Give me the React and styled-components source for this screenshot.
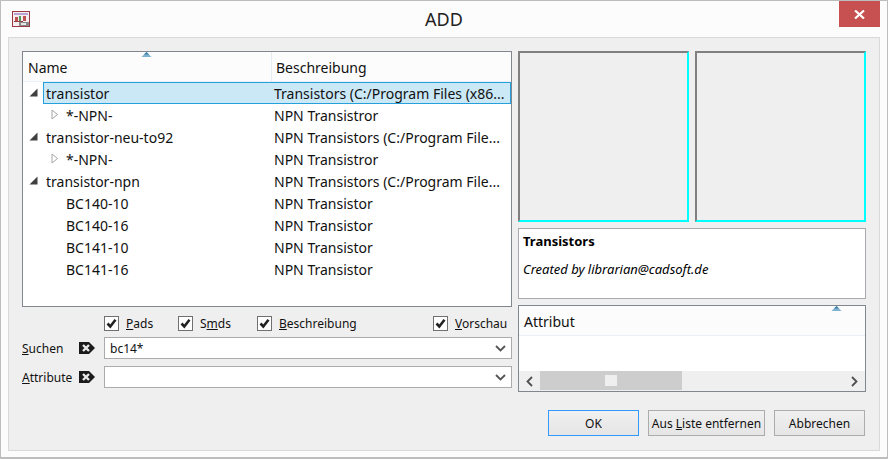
import React from 'react';
import styled, { createGlobalStyle } from 'styled-components';

const Global = createGlobalStyle`
    html, body {
        margin: 0;
        padding: 0;
        background: #fcfcfc;
    }
    * {
        box-sizing: border-box;
    }
`;

const Window = styled.div`
    width: 888px;
    height: 459px;
    display: flex;
    flex-direction: column;
    background: #fcfcfc;
    border: 1px solid #bdbdbd;
    border-bottom-width: 2px;
    font-family: 'Noto Sans', 'Liberation Sans', sans-serif;
    color: #111;
    overflow: hidden;
`;

const TitleBar = styled.div`
    height: 36px;
    flex: none;
    display: grid;
    grid-template-columns: 48px 1fr 41px 7px;
    align-items: start;
`;

const AppIcon = styled.div`
    padding: 10px 0 0 11px;
    line-height: 0;
`;

const Title = styled.div`
    font-size: 18px;
    line-height: 37px;
    text-align: center;
    color: #222;
`;

const CloseButton = styled.div`
    height: 26px;
    background: #c75050;
    display: flex;
    align-items: center;
    justify-content: center;
`;

const Panel = styled.div`
    flex: 1;
    margin: 0 7px 6px 7px;
    padding: 13px 13px 14px 13px;
    background: #efefef;
    border: 1px solid #d9d9d9;
    display: flex;
    flex-direction: column;
`;

const Columns = styled.div`
    display: grid;
    grid-template-columns: 490px 348px;
    column-gap: 6px;
`;

const LeftColumn = styled.div`
    display: flex;
    flex-direction: column;
`;

const RightColumn = styled.div`
    display: flex;
    flex-direction: column;
`;

const TreeBox = styled.div`
    height: 256px;
    background: #fff;
    border: 1px solid #82878f;
`;

const HeaderRow = styled.div`
    position: relative;
    height: 30px;
    display: flex;
    background: #fcfcfc;
    border-bottom: 1px solid #eaf0f6;
    font-size: 14px;
    line-height: 32px;
`;

const HeaderCell = styled.div`
    flex: ${p => (p.$width ? `0 0 ${p.$width}px` : 1)};
    padding-left: ${p => p.$pad}px;
    border-right: ${p => (p.$divider ? '1px solid #e6ecf2' : 'none')};
`;

const SortMark = styled.div`
    position: absolute;
    top: 0;
    left: ${p => p.$left}px;
    line-height: 0;
`;

const TreeRow = styled.div`
    height: 22px;
    display: flex;
    font-size: 14px;
    line-height: 20px;
`;

const Gutter = styled.div`
    flex: 0 0 20px;
    padding: 6px 0 0 6px;
    line-height: 0;
`;

const RowBody = styled.div`
    flex: 1;
    min-width: 0;
    display: flex;
    padding-top: 1px;
    background: ${p => (p.$selected ? '#cbe8f6' : 'transparent')};
    border: 1px solid ${p => (p.$selected ? '#26a0da' : 'transparent')};
`;

const NameCell = styled.div`
    flex: 0 0 230px;
    display: flex;
    align-items: flex-start;
    padding-left: ${p => (p.$depth ? (p.$toggle ? 7 : 22) : 2)}px;
`;

const DescCell = styled.div`
    flex: 1;
    min-width: 0;
    white-space: nowrap;
`;

const ChildToggle = styled.span`
    flex: 0 0 15px;
    padding-top: 3px;
    line-height: 0;
`;

const ChecksRow = styled.div`
    height: 17px;
    margin-top: 8px;
    padding-left: 82px;
    display: flex;
    font-size: 12px;
`;

const CheckItem = styled.label`
    flex: 0 0 ${p => p.$width}px;
    display: flex;
    align-items: center;
    gap: 7px;
    white-space: nowrap;
`;

const CheckBox = styled.span`
    width: 15px;
    height: 15px;
    flex: none;
    background: #fff;
    border: 1px solid #707070;
    line-height: 0;
`;

const FieldRow = styled.div`
    height: 22px;
    margin-top: ${p => p.$top}px;
    display: flex;
    align-items: center;
    font-size: 12px;
`;

const FieldLabel = styled.div`
    flex: 0 0 57px;
`;

const FieldIcon = styled.div`
    flex: 0 0 25px;
    line-height: 0;
`;

const ComboBox = styled.div`
    flex: 1;
    height: 100%;
    display: flex;
    align-items: center;
    justify-content: space-between;
    padding: 0 5px;
    background: #fff;
    border: 1px solid #ababab;
`;

const Previews = styled.div`
    height: 171px;
    display: flex;
    gap: 6px;
`;

const Preview = styled.div`
    flex: 1;
    border: 2px solid;
    border-color: #808080 #00ffff #00ffff #808080;
`;

const InfoBox = styled.div`
    height: 71px;
    margin-top: 6px;
    padding: 4px 4px;
    background: #fff;
    border: 1px solid #a9a9b0;
    font-size: 13px;
    color: #000;
`;

const InfoTitle = styled.div`
    font-weight: 700;
    line-height: 16px;
`;

const InfoText = styled.div`
    margin-top: 12px;
    font-style: italic;
    line-height: 16px;
`;

const AttrBox = styled.div`
    height: 87px;
    margin-top: 6px;
    background: #fff;
    border: 1px solid #82878f;
    display: flex;
    flex-direction: column;
`;

const AttrBody = styled.div`
    flex: 1;
`;

const ScrollBar = styled.div`
    height: 20px;
    display: flex;
    align-items: center;
    background: #efefef;
`;

const ScrollArrow = styled.div`
    flex: 0 0 21px;
    display: flex;
    justify-content: center;
    line-height: 0;
`;

const ScrollTrack = styled.div`
    flex: 1;
    height: 100%;
`;

const ScrollThumb = styled.div`
    width: 142px;
    height: 19px;
    background: #cdcdcd;
    display: flex;
    align-items: center;
    justify-content: center;
`;

const ThumbGrip = styled.div`
    width: 12px;
    height: 11px;
    background: #efefef;
`;

const Footer = styled.div`
    margin-top: 18px;
    padding-right: 1px;
    display: flex;
    justify-content: flex-end;
    gap: 9px;
`;

const Button = styled.div`
    width: ${p => p.$width}px;
    height: 26px;
    display: flex;
    align-items: center;
    justify-content: center;
    font-size: 12px;
    white-space: nowrap;
    background: linear-gradient(#f0f0f0, #e5e5e5);
    border: 1px solid ${p => (p.$focused ? '#3399ff' : '#acacac')};
`;

const SortIcon = () => (
    <svg width="11" height="5" viewBox="0 0 11 5">
        <path d="M5.5 0 L10.5 5 H0.5 Z" fill="#7fb2cf" />
        <path d="M5.5 0 L3 2.5 H8 Z" fill="#3f7fa6" />
    </svg>
);

const OpenArrow = () => (
    <svg width="9" height="9" viewBox="0 0 9 9">
        <path d="M8.5 0.5 V8.5 H0.5 Z" fill="#404040" />
    </svg>
);

const ClosedArrow = () => (
    <svg width="8" height="11" viewBox="0 0 8 11">
        <path d="M1 1 L6.5 5.5 L1 10 Z" fill="none" stroke="#a6a6a6" />
    </svg>
);

const CheckMark = () => (
    <svg width="13" height="13" viewBox="0 0 13 13">
        <path d="M2.5 6.5 L5.3 9.5 L10.5 2.8" fill="none" stroke="#222" strokeWidth="2.6" />
    </svg>
);

const TagIcon = () => (
    <svg width="16" height="12" viewBox="0 0 16 12">
        <path d="M0 0 H10 L16 6 L10 12 H0 Z" fill="#1a1a1a" />
        <path d="M4 3 L10 9 M10 3 L4 9" stroke="#e8e8e8" strokeWidth="2.4" />
    </svg>
);

const Chevron = () => (
    <svg width="11" height="7" viewBox="0 0 11 7">
        <path d="M1 1 L5.5 5.5 L10 1" fill="none" stroke="#555" strokeWidth="1.8" />
    </svg>
);

const ScrollChevron = ({ flip }) => (
    <svg width="7" height="11" viewBox="0 0 7 11">
        <path d={flip ? 'M1 1 L5.5 5.5 L1 10' : 'M6 1 L1.5 5.5 L6 10'} fill="none" stroke="#505050" strokeWidth="1.8" />
    </svg>
);

const CloseGlyph = () => (
    <svg width="11" height="9" viewBox="0 0 11 9">
        <path d="M1 0.5 L10 8.5 M10 0.5 L1 8.5" stroke="#fff" strokeWidth="2.2" />
    </svg>
);

const LogoIcon = () => (
    <svg width="18" height="16" viewBox="0 0 18 16">
        <rect x="0.5" y="0.5" width="17" height="15" fill="#f4eef0" stroke="#9c3a44" />
        <rect x="2" y="2" width="14" height="2" fill="#b9a3d0" />
        <rect x="3" y="6" width="3" height="4" fill="#c0504d" />
        <rect x="7" y="5" width="2" height="5" fill="#4f9a5c" />
        <rect x="11" y="5" width="3" height="5" fill="#c0504d" />
        <rect x="2" y="10" width="9" height="1" fill="#9c3a44" />
        <rect x="7" y="11" width="10" height="4" fill="#8a8a8a" />
        <rect x="9" y="12" width="5" height="2" fill="#e6e6e6" />
    </svg>
);

const rows = [
    { name: 'transistor', desc: 'Transistors (C:/Program Files (x86...', open: true, selected: true },
    { name: '*-NPN-', desc: 'NPN Transistror', depth: 1, closed: true },
    { name: 'transistor-neu-to92', desc: 'NPN Transistors (C:/Program File...', open: true },
    { name: '*-NPN-', desc: 'NPN Transistror', depth: 1, closed: true },
    { name: 'transistor-npn', desc: 'NPN Transistors (C:/Program File...', open: true },
    { name: 'BC140-10', desc: 'NPN Transistor', depth: 1 },
    { name: 'BC140-16', desc: 'NPN Transistor', depth: 1 },
    { name: 'BC141-10', desc: 'NPN Transistor', depth: 1 },
    { name: 'BC141-16', desc: 'NPN Transistor', depth: 1 },
];

const checks = [
    { before: '', key: 'P', after: 'ads', width: 74 },
    { before: 'S', key: 'm', after: 'ds', width: 79 },
    { before: '', key: 'B', after: 'eschreibung', width: 176 },
    { before: '', key: 'V', after: 'orschau', width: 78 },
];

const App = () => {
    return (
        <>
            <Global />
            <Window>
                <TitleBar>
                    <AppIcon>
                        <LogoIcon />
                    </AppIcon>
                    <Title>ADD</Title>
                    <CloseButton>
                        <CloseGlyph />
                    </CloseButton>
                </TitleBar>
                <Panel>
                    <Columns>
                        <LeftColumn>
                            <TreeBox>
                                <HeaderRow>
                                    <SortMark $left={118}>
                                        <SortIcon />
                                    </SortMark>
                                    <HeaderCell $width={249} $pad={5} $divider>
                                        Name
                                    </HeaderCell>
                                    <HeaderCell $pad={4}>Beschreibung</HeaderCell>
                                </HeaderRow>
                                {rows.map((row, i) => (
                                    <TreeRow key={i}>
                                        <Gutter>{row.open && <OpenArrow />}</Gutter>
                                        <RowBody $selected={row.selected}>
                                            <NameCell $depth={row.depth} $toggle={row.closed}>
                                                {row.closed && (
                                                    <ChildToggle>
                                                        <ClosedArrow />
                                                    </ChildToggle>
                                                )}
                                                {row.name}
                                            </NameCell>
                                            <DescCell>{row.desc}</DescCell>
                                        </RowBody>
                                    </TreeRow>
                                ))}
                            </TreeBox>
                            <ChecksRow>
                                {checks.map(c => (
                                    <CheckItem key={c.key} $width={c.width}>
                                        <CheckBox>
                                            <CheckMark />
                                        </CheckBox>
                                        <span>
                                            {c.before}
                                            <u>{c.key}</u>
                                            {c.after}
                                        </span>
                                    </CheckItem>
                                ))}
                            </ChecksRow>
                            <FieldRow $top={5}>
                                <FieldLabel>
                                    <u>S</u>uchen
                                </FieldLabel>
                                <FieldIcon>
                                    <TagIcon />
                                </FieldIcon>
                                <ComboBox>
                                    bc14*
                                    <Chevron />
                                </ComboBox>
                            </FieldRow>
                            <FieldRow $top={7}>
                                <FieldLabel>
                                    <u>A</u>ttribute
                                </FieldLabel>
                                <FieldIcon>
                                    <TagIcon />
                                </FieldIcon>
                                <ComboBox>
                                    <span />
                                    <Chevron />
                                </ComboBox>
                            </FieldRow>
                        </LeftColumn>
                        <RightColumn>
                            <Previews>
                                <Preview />
                                <Preview />
                            </Previews>
                            <InfoBox>
                                <InfoTitle>Transistors</InfoTitle>
                                <InfoText>Created by librarian@cadsoft.de</InfoText>
                            </InfoBox>
                            <AttrBox>
                                <HeaderRow>
                                    <SortMark $left={312}>
                                        <SortIcon />
                                    </SortMark>
                                    <HeaderCell $pad={5}>Attribut</HeaderCell>
                                </HeaderRow>
                                <AttrBody />
                                <ScrollBar>
                                    <ScrollArrow>
                                        <ScrollChevron />
                                    </ScrollArrow>
                                    <ScrollTrack>
                                        <ScrollThumb>
                                            <ThumbGrip />
                                        </ScrollThumb>
                                    </ScrollTrack>
                                    <ScrollArrow>
                                        <ScrollChevron flip />
                                    </ScrollArrow>
                                </ScrollBar>
                            </AttrBox>
                        </RightColumn>
                    </Columns>
                    <Footer>
                        <Button $width={91} $focused>OK</Button>
                        <Button $width={117}>
                            Aus&nbsp;<u>L</u>iste entfernen
                        </Button>
                        <Button $width={91}>Abbrechen</Button>
                    </Footer>
                </Panel>
            </Window>
        </>
    );
};

export default App;
